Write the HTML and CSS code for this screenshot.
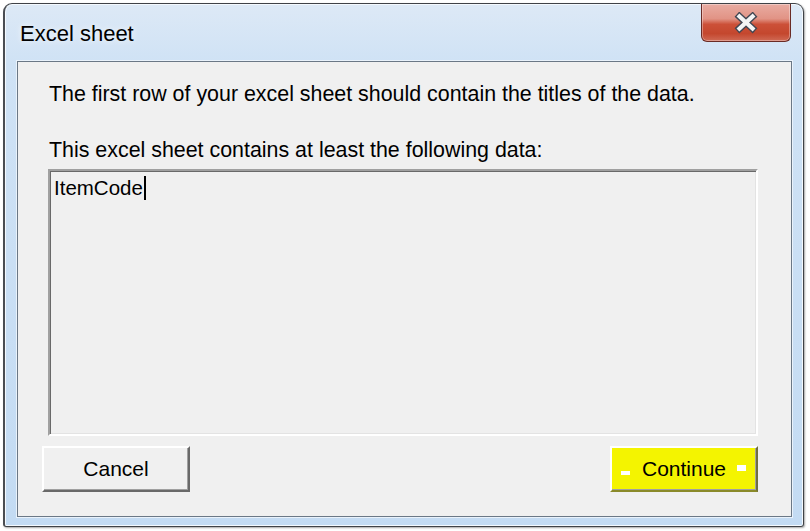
FILE: index.html
```html
<!DOCTYPE html>
<html>
<head>
<meta charset="utf-8">
<link rel="stylesheet" href="styles.css">
</head>
<body>
<div class="window">
  <div class="titlebar">
    <div class="title">Excel sheet</div>
    <div class="close">
      <svg width="28" height="22" viewBox="0 0 28 22">
        <path d="M7.5 4.5 L20.5 16.5 M20.5 4.5 L7.5 16.5" stroke="#414652" stroke-width="7" stroke-linecap="square"/>
        <path d="M7.5 4.5 L20.5 16.5 M20.5 4.5 L7.5 16.5" stroke="#f4f4f4" stroke-width="4.2" stroke-linecap="square"/>
      </svg>
    </div>
  </div>
  <div class="panel">
    <p class="line first">The first row of your excel sheet should contain the titles of the data.</p>
    <p class="line second">This excel sheet contains at least the following data:</p>
    <div class="textbox"><span class="value">ItemCode</span><span class="caret"></span></div>
    <div class="buttons">
      <div class="btn">Cancel</div>
      <div class="btn primary"><span class="mark left"></span>Continue<span class="mark right"></span></div>
    </div>
  </div>
</div>
</body>
</html>
```

FILE: styles.css
```css
html, body {
  margin: 0;
  padding: 0;
  background: #ffffff;
  font-family: "Liberation Sans", Arial, sans-serif;
}

.window {
  margin: 3px 5px 4px 3px;
  width: 801px;
  height: 524px;
  border: 1px solid #3f4247;
  border-left: 2px solid #4a4d52;
  border-radius: 9px 9px 3px 3px;
  background: linear-gradient(to bottom, #dde9f6 0px, #cfe2f5 60px, #c3dbf3 100%);
  box-shadow: inset 0 0 0 1px #f4f9fe, 1px 1px 2px rgba(0,0,0,0.35);
  display: flex;
  flex-direction: column;
  box-sizing: border-box;
  overflow: hidden;
}

.titlebar {
  height: 57px;
  display: flex;
  align-items: flex-start;
  justify-content: space-between;
  padding: 0 12px 0 15px;
  flex: none;
}

.title {
  font-size: 22px;
  color: #000;
  margin-top: 17px;
  text-shadow: 0 0 6px rgba(255,255,255,0.9);
}

.close {
  width: 90px;
  height: 38px;
  box-sizing: border-box;
  border: 1px solid #6a2b25;
  border-top: none;
  border-radius: 0 0 6px 6px;
  background: linear-gradient(to bottom, #e9aca2 0%, #e19385 40%, #cc5038 55%, #c4472e 80%, #cf6a55 100%);
  box-shadow: inset 0 0 0 1px rgba(255,255,255,0.35);
  display: flex;
  align-items: center;
  justify-content: center;
}

.panel {
  flex: 1;
  margin: 0 11px 9px 12px;
  background: #f0f0f0;
  border: 1px solid #6b7886;
  box-shadow: 0 0 0 1px #e9f2fb;
  padding: 20px 33px 0 24px;
  display: flex;
  flex-direction: column;
}

.line {
  margin: 0 0 0 7px;
  font-size: 21.4px;
  line-height: 24px;
  color: #000;
}

.line.second {
  margin-top: 32px;
}

.textbox {
  margin: 7px 0 0 6px;
  height: 267px;
  box-sizing: border-box;
  border-top: 2px solid #a0a0a0;
  border-left: 2px solid #a0a0a0;
  border-right: 2px solid #ffffff;
  border-bottom: 2px solid #ffffff;
  box-shadow: inset 1px 1px 0 #696969, inset -1px -1px 0 #e3e3e3;
  padding: 5px 4px;
  font-size: 20.5px;
  line-height: 24px;
  display: flex;
  align-items: flex-start;
}

.caret {
  width: 2px;
  height: 24px;
  background: #000;
  margin-left: 1px;
}

.buttons {
  margin-top: 10px;
  display: flex;
  justify-content: space-between;
}

.btn {
  width: 148px;
  height: 46px;
  box-sizing: border-box;
  background: #f0f0f0;
  border-top: 2px solid #ffffff;
  border-left: 2px solid #ffffff;
  border-right: 2px solid #696969;
  border-bottom: 2px solid #696969;
  box-shadow: inset -1px -1px 0 #a0a0a0;
  font-size: 21px;
  display: flex;
  align-items: center;
  justify-content: center;
  color: #000;
}

.btn.primary {
  background: #f4f400;
  position: relative;
  border-right-color: #6e6e40;
  border-bottom-color: #8a8a2a;
}

.mark {
  position: absolute;
  background: #ffffff;
  height: 6px;
  width: 9px;
}

.mark.left {
  left: 9px;
  top: 23px;
  height: 4px;
}

.mark.right {
  right: 10px;
  top: 17px;
}
```
